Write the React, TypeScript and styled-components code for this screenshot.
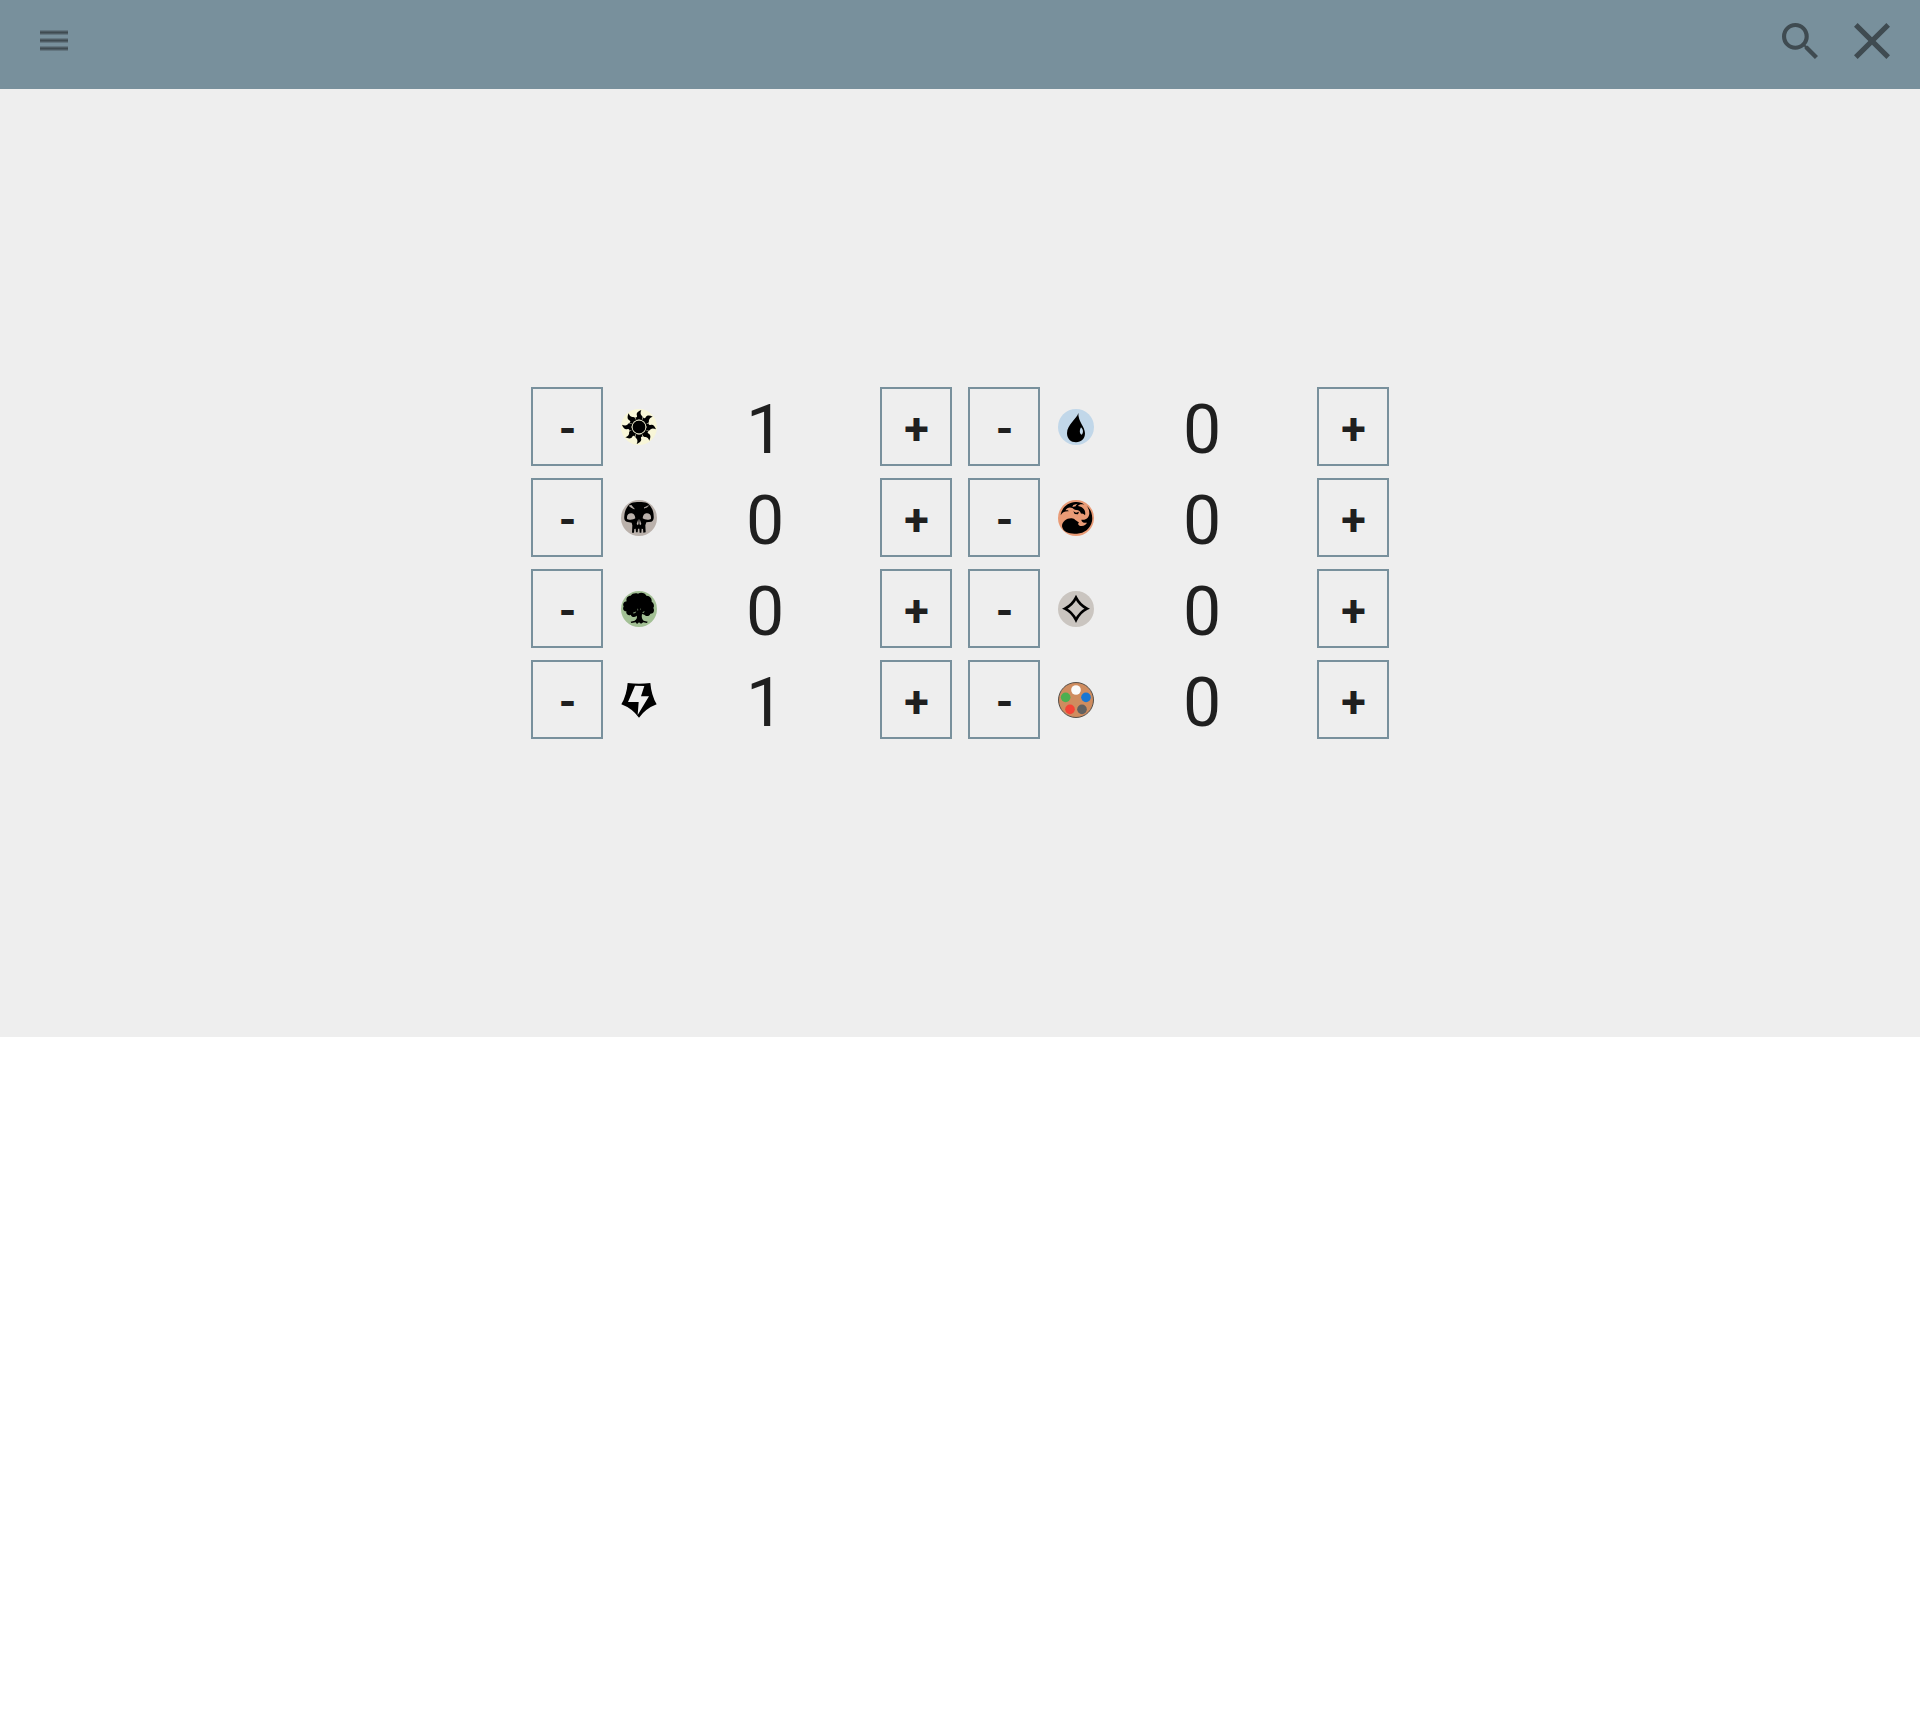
import React, { useState } from "react";
import styled, { createGlobalStyle } from "styled-components";

const GlobalStyle = createGlobalStyle`
  *, *::before, *::after { box-sizing: border-box; }
  body {
    margin: 0;
    background: #fff;
    color: #1f1f1f;
    font-family: Roboto, "Liberation Sans", sans-serif;
  }
`;

const Header = styled.header`
  display: flex;
  justify-content: space-between;
  align-items: flex-start;
  height: 89px;
  padding: 23px 30px 0 40px;
  background: #78909c;
`;

const Actions = styled.div`
  display: flex;
  gap: 36px;
`;

const IconButton = styled.button`
  display: flex;
  align-items: center;
  height: 36px;
  padding: 0;
  border: 0;
  background: none;
  color: #3f4b51;
  cursor: pointer;
`;

const Main = styled.main`
  display: flex;
  justify-content: center;
  align-items: center;
  min-height: 948px;
  background: #eee;
`;

const Grid = styled.div`
  display: grid;
  grid-template-columns: repeat(2, 421px);
  gap: 12px 16px;
`;

const Counter = styled.div`
  display: flex;
  align-items: center;
  height: 79px;
`;

const StepButton = styled.button`
  flex: none;
  width: 72px;
  height: 79px;
  padding: 4px 0 0 1px;
  border: 2px solid #78909c;
  background: none;
  color: inherit;
  font: 700 45px/48px Roboto, "Liberation Sans", sans-serif;
  text-align: center;
  cursor: pointer;
`;

const Symbol = styled.svg`
  flex: none;
  width: 36px;
  height: 36px;
  margin-left: 18px;
`;

const Value = styled.output`
  flex: 1;
  padding: 6px 7px 0 0;
  font-size: 68px;
  line-height: 76px;
  text-align: center;
`;

const RAYS = [0, 45, 90, 135, 180, 225, 270, 315];

const White = () => (
  <>
    <circle cx="54" cy="54" r="54" fill="#f8f6d8" />
    {RAYS.map((a) => (
      <path
        key={a}
        transform={`rotate(${a} 54 54)`}
        d="M61 3C51 7 45 12 48 20C49 24 46 26 43 24C45 28 45 31 46 34Q54 29 62 34C66 26 66 23 61 19C57 14 59 8 61 3Z"
      />
    ))}
    <circle cx="54" cy="54" r="20.5" stroke="#f8f6d8" strokeWidth="2" />
  </>
);

const Blue = () => (
  <>
    <circle cx="54" cy="54" r="54" fill="#c1d7e9" />
    <path d="M61 12C57 29 27 46 27 73C27 90 39 100 54 100C70 100 81 89 81 73C81 53 60 38 61 12Z" />
    <path d="M69 55C77 62 76 73 71 77C64 75 64 64 69 55Z" fill="#c1d7e9" />
  </>
);

const Black = () => (
  <>
    <circle cx="54" cy="54" r="54" fill="#bab1ab" />
    <path d="M31 9C44 5 66 5 78 9C90 17 98 31 98 48C99 56 97 63 91 65L76 67L73 76L74 97L67 98L66 87L62 86L61 98L56 98L55 86L51 86L50 97L45 97L44 86L40 87L39 98L33 98L34 76L32 68L17 65C10 63 9 56 10 48C11 31 18 17 31 9Z" />
    <path d="M18 51C18 43 25 39 32 40C39 40 42 47 43 55C38 60 22 61 18 56ZM90 51C90 43 83 39 76 40C69 40 66 47 65 55C70 60 86 61 90 56ZM52 57L47 72L51 76L53 70ZM56 57L61 72L57 76L55 70Z" fill="#bab1ab" />
    <path d="M24 17Q29 22 40 27L30 15M83 17Q77 19 69 24L79 21" fill="#bab1ab" stroke="#bab1ab" strokeWidth="2" />
  </>
);

const Red = () => (
  <>
    <circle cx="54" cy="54" r="54" fill="#e99b76" />
    <path d="M8 46C10 24 30 7 52 6C62 5 73 8 79 14C70 12 63 13 60 18C74 20 85 31 81 46C77 41 73 39 69 41C67 34 62 30 56 30C50 31 47 27 43 24C34 20 25 24 23 31C28 30 32 31 32 34C20 33 13 37 8 46Z" />
    <path d="M86 17C99 28 105 46 102 64C97 86 79 101 57 101C36 103 15 97 12 79C12 64 27 54 41 55C51 56 53 63 63 67C57 73 63 78 71 78C79 77 84 73 87 68C78 70 70 66 70 59C83 62 94 53 94 40C94 31 91 23 86 17Z" />
    <path d="M46 34L54 38L63 35L60 43L50 42Z" />
    <path d="M46 15L59 11Q53 15 53 19L43 21Z" fill="#e99b76" />
  </>
);

const Green = () => (
  <>
    <circle cx="54" cy="54" r="54" fill="#a3c095" />
    <path d="M29 14C33 7 44 5 51 8C60 2 73 6 76 14C86 13 94 23 92 32C99 36 101 46 97 51C102 60 97 69 88 68C86 76 75 77 70 71L63 69C61 78 63 86 68 89L80 92L78 96L67 94L60 98L54 94L48 99L44 94L31 96L29 92L41 89C48 84 49 79 47 74C41 80 32 79 29 71C22 76 14 69 16 61C8 62 4 54 8 46C4 40 9 31 17 31C14 21 20 14 29 14Z" />
    <path d="M37 64Q42 65 46 61Q44 68 37 67ZM65 63L71 61Q70 66 65 66ZM49 52L52 57L50 59ZM59 51L60 55L58 58Z" fill="#a3c095" />
  </>
);

const Colorless = () => (
  <>
    <circle cx="54" cy="54" r="54" fill="#cac5c0" />
    <path d="M54 20Q65 42 87 53Q65 64 54 87Q43 64 21 53Q43 42 54 20Z" fill="none" stroke="#000" strokeWidth="8" />
  </>
);

const Planeswalker = () => (
  <path fillRule="evenodd" d="M20 3Q54 8 88 3Q91 40 107 67Q75 79 54 107Q33 79 1 67Q17 40 20 3ZM42 11L21 60H53L50 99L84 43H60L70 12Z" />
);

const Palette = () => (
  <>
    <circle cx="54" cy="54" r="52.5" fill="#cf8c5f" stroke="#55504b" strokeWidth="3" />
    <circle cx="54" cy="24" r="14.5" fill="#fafafa" />
    <circle cx="23" cy="46" r="14.5" fill="#4caf50" />
    <circle cx="84" cy="46" r="14.5" fill="#1976d2" />
    <circle cx="36" cy="82" r="14.5" fill="#f44336" />
    <circle cx="72" cy="82" r="14.5" fill="#616161" />
  </>
);

const COUNTERS = [
  { name: "White", start: 1, Art: White },
  { name: "Blue", start: 0, Art: Blue },
  { name: "Black", start: 0, Art: Black },
  { name: "Red", start: 0, Art: Red },
  { name: "Green", start: 0, Art: Green },
  { name: "Colorless", start: 0, Art: Colorless },
  { name: "Planeswalker", start: 1, Art: Planeswalker },
  { name: "Multicolor", start: 0, Art: Palette },
];

export default function App() {
  const [values, setValues] = useState(COUNTERS.map((c) => c.start));
  const step = (index: number, by: number) =>
    setValues((now) => now.map((v, i) => (i === index ? Math.max(0, v + by) : v)));

  return (
    <>
      <GlobalStyle />
      <Header>
        <IconButton aria-label="Menu">
          <svg width="28" height="22" viewBox="0 0 28 22" fill="currentColor">
            {[0, 8, 16].map((y) => (
              <g key={y}>
                <rect y={y} width="28" height="5" opacity="0.35" />
                <rect y={y + 1} width="28" height="3" opacity="0.6" />
                <rect y={y + 2} width="28" height="1" />
              </g>
            ))}
          </svg>
        </IconButton>
        <Actions>
          <IconButton aria-label="Search">
            <svg width="36" height="36" viewBox="3 3 17.49 17.49" fill="currentColor">
              <path d="M15.5 14h-.79l-.28-.27A6.471 6.471 0 0 0 16 9.5 6.5 6.5 0 1 0 9.5 16c1.61 0 3.09-.59 4.23-1.57l.27.28v.79l5 4.99L20.49 19l-4.99-5zm-6 0C7.01 14 5 11.99 5 9.5S7.01 5 9.5 5 14 7.01 14 9.5 11.99 14 9.5 14z" />
            </svg>
          </IconButton>
          <IconButton aria-label="Close">
            <svg width="36" height="36" viewBox="5 5 14 14" fill="currentColor">
              <path d="M19 6.41 17.59 5 12 10.59 6.41 5 5 6.41 10.59 12 5 17.59 6.41 19 12 13.41 17.59 19 19 17.59 13.41 12z" />
            </svg>
          </IconButton>
        </Actions>
      </Header>
      <Main>
        <Grid>
          {COUNTERS.map(({ name, Art }, i) => (
            <Counter key={name} role="group" aria-label={name}>
              <StepButton aria-label={`Decrease ${name}`} onClick={() => step(i, -1)}>-</StepButton>
              <Symbol viewBox="0 0 108 108" aria-hidden="true">
                <Art />
              </Symbol>
              <Value>{values[i]}</Value>
              <StepButton aria-label={`Increase ${name}`} onClick={() => step(i, 1)}>+</StepButton>
            </Counter>
          ))}
        </Grid>
      </Main>
    </>
  );
}
